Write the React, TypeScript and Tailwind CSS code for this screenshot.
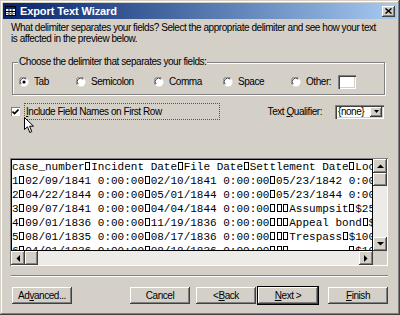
import React from 'react';

const raised =
  'bg-[#d4d0c8] shadow-[inset_-1px_-1px_#404040,inset_1px_1px_#ffffff,inset_-2px_-2px_#808080,inset_2px_2px_#d4d0c8]';

const rows = [
  'case_number\tIncident Date\tFile Date\tSettlement Date\tLocation\tCase Type',
  '1\t02/09/1841 0:00:00\t02/10/1841 0:00:00\t05/23/1842 0:00:00\tDebt',
  '2\t04/22/1844 0:00:00\t05/01/1844 0:00:00\t05/23/1844 0:00:00\tDebt',
  '3\t09/07/1841 0:00:00\t04/04/1844 0:00:00\t\t\tAssumpsit\t$25',
  '4\t09/01/1836 0:00:00\t11/19/1836 0:00:00\t\t\tAppeal bond\t$50',
  '5\t08/01/1835 0:00:00\t08/17/1836 0:00:00\t\t\tTrespass\t$100',
  '6\t04/01/1836 0:00:00\t08/18/1836 0:00:00\t\t\t         \t$1000',
];

function TabBox() {
  return (
    <span className="inline-block w-[1ch] text-center">
      <span className="inline-block w-[5px] h-[8px] border border-black" />
    </span>
  );
}

function Row({ text }: { text: string }) {
  const parts = text.split('\t');
  return (
    <div className="h-[14px] leading-[14px] whitespace-pre">
      {parts.map((p, i) => (
        <React.Fragment key={i}>
          {i > 0 && <TabBox />}
          {p}
        </React.Fragment>
      ))}
    </div>
  );
}

function Arrow({ dir }: { dir: 'up' | 'down' | 'left' | 'right' }) {
  const pts = {
    up: '0,4 7,4 3.5,0.5',
    down: '0,0 7,0 3.5,3.5',
    left: '4,0 4,7 0.5,3.5',
    right: '0,0 0,7 3.5,3.5',
  }[dir];
  const vertical = dir === 'up' || dir === 'down';
  return (
    <div className={`w-[14px] h-[14px] shrink-0 flex items-center justify-center ${raised}`}>
      <svg width={vertical ? 7 : 4} height={vertical ? 4 : 7}>
        <polygon points={pts} fill="#000" />
      </svg>
    </div>
  );
}

function Radio({ checked, label, w }: { checked?: boolean; label: string; w: string }) {
  return (
    <div className={`flex items-center ${w}`}>
      <svg width="10" height="10" viewBox="0 0 10 10">
        <circle cx="5" cy="5" r="4.5" fill="#fff" />
        <path d="M1.2 7.5 A4.3 4.3 0 0 1 7.5 1.2" stroke="#808080" strokeWidth="1" fill="none" />
        <path d="M2.2 7.2 A3.3 3.3 0 0 1 7.2 2.2" stroke="#404040" strokeWidth="1" fill="none" />
        {checked && <circle cx="5" cy="5" r="1.6" fill="#000" />}
      </svg>
      <span className="ml-[5px]">{label}</span>
    </div>
  );
}

function Btn({ children, def }: { children: React.ReactNode; def?: boolean }) {
  return (
    <div
      className={`w-[60px] h-[17px] flex items-center justify-center ${raised} ${
        def ? 'outline outline-1 outline-black' : ''
      }`}
    >
      {children}
    </div>
  );
}

export default function App() {
  return (
    <div className="w-[400px] h-[315px] overflow-hidden bg-[#d4d0c8] p-[3px] flex flex-col text-black text-[10px] font-['Liberation_Sans',Arial,sans-serif] shadow-[inset_-1px_-1px_#404040,inset_1px_1px_#d4d0c8,inset_-2px_-2px_#808080,inset_2px_2px_#ffffff]">
      {/* title bar */}
      <div className="h-[16px] shrink-0 flex items-center pl-[2px] pr-[2px] bg-gradient-to-r from-[#0a246a] to-[#a6caf0]">
        <svg width="11" height="10" viewBox="0 0 11 10">
          <rect x="0.5" y="0.5" width="10" height="9" fill="#fff" stroke="#000" />
          <rect x="1" y="1" width="9" height="2" fill="#0a246a" />
          <line x1="4" y1="3" x2="4" y2="9" stroke="#000" />
          <line x1="7" y1="3" x2="7" y2="9" stroke="#000" />
          <line x1="1" y1="5.5" x2="10" y2="5.5" stroke="#000" />
          <line x1="1" y1="7.5" x2="10" y2="7.5" stroke="#808080" />
        </svg>
        <span className="ml-[4px] text-white font-bold text-[11px] tracking-[-0.1px]">Export Text Wizard</span>
        <div className="flex-1" />
        <div className={`w-[13px] h-[11px] flex items-center justify-center ${raised}`}>
          <svg width="7" height="6" viewBox="0 0 7 6">
            <path d="M0.5 0.5 L6.5 5.5 M6.5 0.5 L0.5 5.5" stroke="#000" strokeWidth="1.5" />
          </svg>
        </div>
      </div>

      <div className="flex-1 flex flex-col pl-[8px] pr-[9px] tracking-[-0.45px]">
        <p className="shrink-0 mt-[3px] leading-[11px] whitespace-nowrap">
          What delimiter separates your fields? Select the appropriate delimiter and see how your text
          <br />
          is affected in the preview below.
        </p>

        {/* group box */}
        <div className="relative shrink-0 mt-[18px] ml-[1px] w-[373px] h-[33px] border border-[#808080] shadow-[1px_1px_#ffffff,inset_1px_1px_#ffffff]">
          <span className="absolute left-[5px] top-[-7px] bg-[#d4d0c8] px-[1px] leading-[12px]">
            Choose the delimiter that separates your fields:
          </span>
          <div className="flex items-center pl-[6px] pt-[11px]">
            <Radio checked label="Tab" w="w-[57px]" />
            <Radio label="Semicolon" w="w-[78px]" />
            <Radio label="Comma" w="w-[69px]" />
            <Radio label="Space" w="w-[68px]" />
            <Radio label="Other:" w="w-[47px]" />
            <div className="w-[18px] h-[14px] bg-white shadow-[inset_1px_1px_#808080,inset_2px_2px_#404040,inset_-1px_-1px_#ffffff,inset_-2px_-2px_#d4d0c8]" />
          </div>
        </div>

        {/* checkbox row */}
        <div className="relative shrink-0 mt-[8px] h-[17px] flex items-center">
          <div className="w-[9px] h-[9px] bg-white flex items-center justify-center shadow-[inset_1px_1px_#808080,inset_-1px_-1px_#ffffff]">
            <svg width="7" height="6" viewBox="0 0 7 6">
              <path d="M0.5 2.5 L2.5 4.5 L6.5 0.5" stroke="#000" strokeWidth="1.6" fill="none" />
            </svg>
          </div>
          <div className="ml-[4px] w-[196px] h-[17px] flex items-center pl-[1px] border border-dotted border-[#555]">
            <span>
              <span className="underline">I</span>nclude Field Names on First Row
            </span>
          </div>
          <div className="flex-1" />
          <span className="mr-[13px]">
            Text <span className="underline">Q</span>ualifier:
          </span>
          <div className="w-[49px] h-[14px] mr-[4px] bg-white flex items-center shadow-[inset_1px_1px_#808080,inset_2px_2px_#404040,inset_-1px_-1px_#ffffff,inset_-2px_-2px_#d4d0c8]">
            <span className="flex-1 pl-[3px] leading-[10px]">{'{none}'}</span>
            <div className={`w-[12px] h-[10px] mr-[2px] flex items-center justify-center ${raised}`}>
              <svg width="5" height="3">
                <polygon points="0,0 5,0 2.5,3" fill="#000" />
              </svg>
            </div>
          </div>
          {/* mouse pointer */}
          <svg className="absolute left-[13px] top-[14px]" width="11" height="17" viewBox="0 0 11 17">
            <path
              d="M0.5 0.5 L0.5 12.5 L3.5 9.8 L5.8 15.5 L7.8 14.6 L5.6 9.2 L9.5 9.2 Z"
              fill="#fff"
              stroke="#000"
              strokeWidth="1"
            />
          </svg>
        </div>

        {/* preview */}
        <div className="shrink-0 mt-[38px] ml-[-1px] w-[378px] h-[108px] p-[1px] tracking-normal shadow-[inset_1px_1px_#808080,inset_-1px_-1px_#ffffff]">
          <div className="grid grid-cols-[362px_14px] grid-rows-[92px_14px]">
            <div className="border border-black bg-white overflow-hidden font-['Liberation_Mono','Courier_New',monospace] text-[11px]">
              {rows.map((r, i) => (
                <Row key={i} text={r} />
              ))}
            </div>
            <div className="flex flex-col bg-[#ecebe7]">
              <Arrow dir="up" />
              <div className={`w-[14px] h-[13px] shrink-0 ${raised}`} />
              <div className="flex-1" />
              <Arrow dir="down" />
            </div>
            <div className="flex bg-[#ecebe7]">
              <Arrow dir="left" />
              <div className={`w-[13px] h-[14px] shrink-0 ${raised}`} />
              <div className="flex-1" />
              <Arrow dir="right" />
            </div>
            <div className="bg-[#d4d0c8]" />
          </div>
        </div>

        {/* separator */}
        <div className="shrink-0 mt-[9px] h-[2px] border-t border-[#808080] border-b border-b-white" />

        {/* buttons */}
        <div className="shrink-0 mt-[10px] flex items-center">
          <div className="ml-[1px]">
            <Btn>
              Ad<span className="underline">v</span>anced...
            </Btn>
          </div>
          <div className="flex-1" />
          <Btn>Cancel</Btn>
          <div className="ml-[6px]">
            <Btn>
              &lt; <span className="underline">B</span>ack
            </Btn>
          </div>
          <div className="ml-[2px]">
            <Btn def>
              <span className="underline">N</span>ext &gt;
            </Btn>
          </div>
          <div className="ml-[10px]">
            <Btn>
              <span className="underline">F</span>inish
            </Btn>
          </div>
        </div>
      </div>
    </div>
  );
}
